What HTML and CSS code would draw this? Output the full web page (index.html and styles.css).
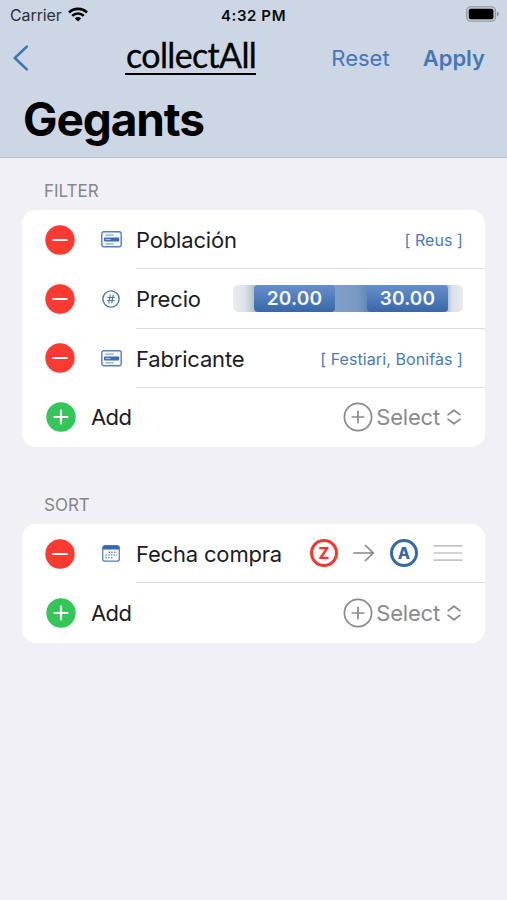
FILE: index.html
```
<!DOCTYPE html>
<html lang="es">
<head>
  <meta charset="UTF-8">
  <title>collectAll</title>
  <link rel="stylesheet" href="styles.css">
</head>
<body>
  <!-- shared icons -->
  <svg class="defs">
    <symbol id="minus" viewBox="0 0 30 30">
      <circle cx="15" cy="15" r="14.7" fill="#fd3a31"/>
      <path d="M8.3 15h13.4" stroke="#fff" stroke-width="2.2" stroke-linecap="round"/>
    </symbol>
    <symbol id="plus" viewBox="0 0 30 30">
      <circle cx="15" cy="15" r="14.7" fill="#34c658"/>
      <path d="M8.5 15h13M15 8.5v13" stroke="#fff" stroke-width="2.2" stroke-linecap="round"/>
    </symbol>
    <symbol id="add-circle" viewBox="0 0 30 30">
      <g fill="none" stroke="#8a8a8d" stroke-width="1.7" stroke-linecap="round">
        <circle cx="15" cy="15" r="13.6"/>
        <path d="M9.3 15h11.4M15 9.3v11.4"/>
      </g>
    </symbol>
    <symbol id="updown" viewBox="0 0 14 16">
      <path d="M1.2 5.6L7 1.2l5.8 4.4M1.2 10.4L7 14.8l5.8-4.4" fill="none" stroke="#8a8a8d" stroke-width="1.8" stroke-linecap="round" stroke-linejoin="round"/>
    </symbol>
    <symbol id="form" viewBox="0 0 21 17">
      <rect x=".8" y=".8" width="19.4" height="15" rx="2" fill="#f4f8fd" stroke="#5581bd" stroke-width="1.4"/>
      <path d="M4.5 4.2h8M4.5 12.8h8" stroke="#8ba6ce" stroke-width="1.3"/>
      <rect x="3" y="6.6" width="15.2" height="3.8" rx=".8" fill="#3c6dae"/>
      <path d="M4.5 8.5h5" stroke="#a9c0e0" stroke-width="1.2"/>
    </symbol>
  </svg>

  <header class="header">
    <div class="status">
      <div class="carrier">
        <span>Carrier</span>
        <svg class="wifi" viewBox="0 0 20 15">
          <g fill="none" stroke="#000" stroke-width="2.7">
            <path d="M1 5.5a12.8 12.8 0 0 1 18 0"/>
            <path d="M4.2 8.9a8.2 8.2 0 0 1 11.6 0"/>
          </g>
          <path d="M6.9 11.4a4.4 4.4 0 0 1 6.2 0L10 14.6z"/>
        </svg>
      </div>
      <div class="clock">4:32 PM</div>
      <svg class="battery" viewBox="0 0 33 16">
        <rect x=".7" y=".7" width="28.8" height="14.6" rx="4" fill="#c3c9d1" stroke="#92979e" stroke-width="1.1"/>
        <rect x="2.8" y="2.8" width="24.6" height="10.4" rx="2"/>
        <path d="M31 5.5q1.8 .8 1.8 2.5T31 10.5z" fill="#868b92"/>
      </svg>
    </div>
    <nav class="nav">
      <svg class="back" viewBox="0 0 16 26">
        <path d="M13.8 1.6L1.8 13l12 11.4" fill="none" stroke="#3f74b7" stroke-width="2.6" stroke-linecap="round" stroke-linejoin="round"/>
      </svg>
      <div class="logo">collectAll</div>
      <a class="reset">Reset</a>
      <a class="apply">Apply</a>
    </nav>
    <h1 class="title">Gegants</h1>
  </header>

  <main class="content">
    <h2 class="label">FILTER</h2>
    <section class="card">
      <div class="row">
        <svg class="action"><use href="#minus"/></svg>
        <svg class="type form"><use href="#form"/></svg>
        <div class="cell">
          <span class="name">Población</span>
          <span class="value">[ Reus ]</span>
        </div>
      </div>
      <div class="row">
        <svg class="action"><use href="#minus"/></svg>
        <svg class="type hash" viewBox="0 0 18 18">
          <g fill="none" stroke="#4a7ab8" stroke-linecap="round">
            <circle cx="9" cy="9" r="8.1" stroke-width="1.4"/>
            <path d="M8.2 5.2L6.8 12.8M11.2 5.2L9.8 12.8M6 7.5h6.5M5.6 10.5h6.5" stroke-width="1.2"/>
          </g>
        </svg>
        <div class="cell">
          <span class="name">Precio</span>
          <div class="range">
            <span class="thumb">20.00</span>
            <span class="thumb">30.00</span>
          </div>
        </div>
      </div>
      <div class="row">
        <svg class="action"><use href="#minus"/></svg>
        <svg class="type form"><use href="#form"/></svg>
        <div class="cell">
          <span class="name">Fabricante</span>
          <span class="value">[ Festiari, Bonifàs ]</span>
        </div>
      </div>
      <div class="row add">
        <svg class="action"><use href="#plus"/></svg>
        <span class="add-name">Add</span>
        <div class="select">
          <svg class="add-circle"><use href="#add-circle"/></svg>
          <span>Select</span>
          <svg class="updown"><use href="#updown"/></svg>
        </div>
      </div>
    </section>

    <h2 class="label sort">SORT</h2>
    <section class="card">
      <div class="row">
        <svg class="action"><use href="#minus"/></svg>
        <svg class="type calendar" viewBox="0 0 18 17">
          <rect x=".7" y=".7" width="16.6" height="15.4" rx="2.2" fill="#fff" stroke="#5581bd" stroke-width="1.3"/>
          <path d="M.8 4.5V3Q.8.7 3 .7h12q2.2 0 2.2 2.3v1.5z" fill="#3569ac"/>
          <path d="M6.5 7.3h8.5M3.5 10h11.5M3.5 12.7h8" stroke="#6a90c5" stroke-width="1.5" stroke-dasharray="1.5 1.2"/>
        </svg>
        <div class="cell">
          <span class="name">Fecha compra</span>
          <div class="order">
            <span class="letter z">Z</span>
            <svg class="arrow" viewBox="0 0 22 18">
              <path d="M1 9h19M12.5 1.5L20.3 9l-7.8 7.5" fill="none" stroke="#858588" stroke-width="1.7" stroke-linecap="round" stroke-linejoin="round"/>
            </svg>
            <span class="letter a">A</span>
            <svg class="grip" viewBox="0 0 30 18">
              <path d="M.5 1.8h29M.5 9h29M.5 16.2h29" stroke="#c5c5c7" stroke-width="1.7"/>
            </svg>
          </div>
        </div>
      </div>
      <div class="row add">
        <svg class="action"><use href="#plus"/></svg>
        <span class="add-name">Add</span>
        <div class="select">
          <svg class="add-circle"><use href="#add-circle"/></svg>
          <span>Select</span>
          <svg class="updown"><use href="#updown"/></svg>
        </div>
      </div>
    </section>
  </main>
</body>
</html>
```
FILE: styles.css
```
* {
  box-sizing: border-box;
}
body {
  margin: 0;
  height: 900px;
  overflow: hidden;
  background-color: #f0f0f6;
  color: #1c1c1e;
  font-family: Inter, "Liberation Sans", sans-serif;
}
svg {
  display: block;
  flex-shrink: 0;
}
.defs {
  display: none;
}

/* header */
.header {
  height: 158px;
  background-color: #cdd6e4;
  border-bottom: 1px solid #b9c0cc;
}
.status {
  height: 30px;
  display: grid;
  grid-template-columns: 1fr auto 1fr;
  align-items: center;
  padding: 0 8px 0 10px;
  font-size: 15px;
}
.carrier {
  display: flex;
  align-items: center;
  gap: 6px;
  color: #2c3038;
  font-size: 16px;
  letter-spacing: -0.1px;
}
.wifi {
  width: 20px;
  height: 15px;
  margin-top: -2px;
}
.clock {
  padding-right: 2px;
  color: #0a0b0d;
  font-weight: 600;
  letter-spacing: 0.6px;
}
.battery {
  width: 33px;
  height: 16px;
  justify-self: end;
  margin-top: -2px;
}
.nav {
  height: 56px;
  display: flex;
  align-items: center;
  padding: 0 22px 0 13px;
  color: #4577b8;
  font-size: 22px;
}
.back {
  width: 16px;
  height: 26px;
}
.logo {
  width: 131px;
  height: 34px;
  margin-left: 96px;
  padding-left: 1px;
  border-bottom: 2px solid #000;
  color: #000;
  font-family: Lato, sans-serif;
  font-size: 34px;
  line-height: 28px;
  letter-spacing: -0.65px;
  white-space: nowrap;
  -webkit-text-stroke: 0.3px #000;
}
.reset {
  margin-left: auto;
}
.apply {
  margin-left: 33px;
  font-weight: 600;
}
.title {
  margin: 5px 0 0 23px;
  color: #000;
  font-size: 46px;
  line-height: 57px;
  font-weight: 700;
  letter-spacing: -1.1px;
}

/* lists */
.content {
  padding: 0 22px;
}
.label {
  margin: 0;
  height: 52px;
  padding: 23px 0 0 22px;
  color: #86868b;
  font-size: 17px;
  line-height: 21px;
  font-weight: 400;
}
.label.sort {
  height: 77px;
  padding-top: 48px;
}
.card {
  background-color: #fff;
  border-radius: 14px;
}
.row {
  height: 59.25px;
  display: flex;
  align-items: center;
  padding-left: 23px;
}
.action {
  width: 30px;
  height: 30px;
}
.type {
  margin: 0 15px 0 27px;
  width: 18px;
  height: 18px;
}
.form {
  width: 21px;
  height: 17px;
  margin: 0 14px 0 26px;
}
.type.hash,
.calendar {
  margin: 0 16px 0 27px;
}
.calendar {
  height: 17px;
}
.cell {
  flex: 1;
  height: 100%;
  display: flex;
  align-items: center;
  justify-content: space-between;
  padding-right: 22px;
  border-bottom: 1.5px solid #dcdcdf;
}
.name,
.add-name,
.select {
  font-size: 22px;
  letter-spacing: -0.18px;
  white-space: nowrap;
}
.name,
.value {
  padding-top: 2px;
}
.add-name {
  letter-spacing: -0.6px;
}
.value {
  color: #4a7ab9;
  font-size: 16px;
  letter-spacing: 0.08px;
}
.range {
  width: 230px;
  height: 27px;
  display: flex;
  align-items: center;
  justify-content: space-between;
  padding: 0 15px 0 21px;
  border-radius: 5px;
  background: linear-gradient(90deg, #eaedf0 0, #dde2ea 12px, #b4bfd0 21px, #7f9fc9 103px, #7b9bc4 123px, #6487b7 135px, #b7c1cf 215px, #dbe0e8 219px, #e9ebee 230px);
}
.thumb {
  width: 81px;
  height: 27px;
  border-radius: 4px;
  background: linear-gradient(#6590cb, #3867a9);
  color: #f5f8fc;
  font-size: 19px;
  line-height: 28px;
  font-weight: 600;
  letter-spacing: 0.2px;
  text-align: center;
}
.add {
  padding-left: 24px;
}
.add-name {
  margin-left: 15px;
}
.select {
  margin-left: auto;
  display: flex;
  align-items: center;
  padding-right: 24px;
  color: #8a8a8d;
}
.add-circle {
  width: 30px;
  height: 30px;
  margin-right: 3px;
}
.updown {
  width: 14px;
  height: 16px;
  margin-left: 7px;
}
.order {
  display: flex;
  align-items: center;
}
.letter {
  width: 28px;
  height: 28px;
  border: 3px solid;
  border-radius: 50%;
  font-size: 16px;
  line-height: 22px;
  font-weight: 800;
  text-align: center;
}
.z {
  color: #fb352d;
}
.a {
  color: #3468aa;
}
.arrow {
  width: 22px;
  height: 18px;
  margin: 0 15px;
}
.grip {
  width: 30px;
  height: 18px;
  margin-left: 15px;
}
```
